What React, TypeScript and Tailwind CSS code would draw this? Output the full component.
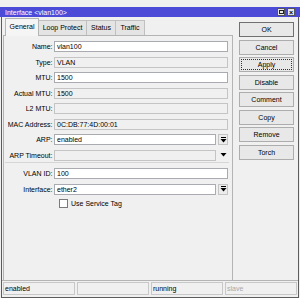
import React from 'react';

function DropIcon({ bar = true }: { bar?: boolean }) {
  return (
    <svg width="7" height="6" viewBox="0 0 7 6" className="block">
      {bar && <rect x="1" y="0" width="5" height="1" fill="#000" />}
      <path d={bar ? 'M0.5 2h6L3.5 5.5z' : 'M0.5 1h6L3.5 4.5z'} fill="#000" />
    </svg>
  );
}

function Row({
  label,
  value = '',
  disabled = false,
  drop = false,
}: {
  label: string;
  value?: string;
  disabled?: boolean;
  drop?: 'box' | 'plain' | false;
}) {
  const box = disabled
    ? 'bg-[#f0f0f0] border-[#c4c4c4]'
    : 'bg-white border-[#a9abb0]';
  return (
    <div className="flex items-center h-[11px]">
      <div className="w-[50px] pr-[1.5px] text-right leading-[11px] whitespace-nowrap">{label}</div>
      <div
        className={`h-[11px] border ${box} flex items-center pl-[2px] leading-[9px] text-black ${
          drop ? 'w-[162px]' : 'w-[174px]'
        }`}
      >
        {value}
      </div>
      {drop === 'box' && (
        <div className="ml-[2px] w-[10px] h-[11px] border border-[#c4c4c4] bg-[#ececec] flex items-center justify-center">
          <DropIcon />
        </div>
      )}
      {drop === 'plain' && (
        <div className="ml-[2px] w-[10px] h-[11px] flex items-center justify-center">
          <DropIcon bar={false} />
        </div>
      )}
    </div>
  );
}

function Btn({ children, kind }: { children: React.ReactNode; kind?: 'default' | 'focus' }) {
  return (
    <div
      className={`h-[15px] w-[55px] border bg-[#e8e8e8] flex items-center justify-center ${
        kind === 'default' ? 'border-[#707070]' : 'border-[#adadad]'
      }`}
    >
      {kind === 'focus' ? (
        <div className="w-[51px] h-[11px] border border-dotted border-[#333] flex items-center justify-center leading-none">
          {children}
        </div>
      ) : (
        <span className="leading-none">{children}</span>
      )}
    </div>
  );
}

export default function App() {
  const tabs = ['Loop Protect', 'Status', 'Traffic'];
  const tabW = ['w-[48px]', 'w-[29px]', 'w-[29px]'];
  const buttons = ['Disable', 'Comment', 'Copy', 'Remove', 'Torch'];

  return (
    <div className="w-[300px] h-[298px] bg-[#f0f0f0] flex flex-col pt-[7px] font-['Liberation_Sans',sans-serif] text-[7px] text-black">
      {/* title bar */}
      <div className="h-[10px] bg-[#4b4bd8] flex items-center justify-between pl-[5px] pr-[5px] text-white">
        <span className="leading-none">Interface &lt;vlan100&gt;</span>
        <div className="flex gap-[2px]">
          <div className="w-[8px] h-[8px] bg-[#e8e8e8] border border-[#555] flex items-center justify-center">
            <div className="w-[5px] h-[4px] border border-[#222]" />
          </div>
          <div className="w-[8px] h-[8px] bg-[#e8e8e8] border border-[#555] flex items-center justify-center text-[7px] font-bold leading-none text-black">
            ×
          </div>
        </div>
      </div>

      {/* body */}
      <div className="flex-1 mx-[1px] border-x border-b border-[#5c5c5c] flex flex-col">
        <div className="flex-1 flex pt-[1px]">
          {/* left: tabs + panel */}
          <div className="ml-[1px] w-[230px] flex flex-col">
            <div className="h-[17px] flex items-end pl-[2px]">
              <div className="relative z-10 h-[18px] -mb-px w-[34px] bg-[#f5f5f5] border border-b-0 border-[#b4b4b4] flex items-center justify-center">
                General
              </div>
              {tabs.map((t, i) => (
                <div
                  key={t}
                  className={`h-[15px] ${tabW[i]} bg-[#e4e4e4] border border-b-0 border-l-0 border-[#c0c0c0] flex items-center justify-center`}
                >
                  {t}
                </div>
              ))}
            </div>
            <div className="flex-1 border-x border-t border-[#b4b4b4] bg-[#f0f0f0] pt-[5px]">
              <div className="flex flex-col gap-[4.5px]">
                <Row label="Name:" value="vlan100" />
                <Row label="Type:" value="VLAN" disabled />
                <Row label="MTU:" value="1500" />
                <Row label="Actual MTU:" value="1500" disabled />
                <Row label="L2 MTU:" disabled />
                <Row label="MAC Address:" value="0C:DB:77:4D:00:01" disabled />
                <Row label="ARP:" value="enabled" drop="box" />
                <Row label="ARP Timeout:" disabled drop="plain" />
              </div>
              <div className="mt-[1.5px] ml-[1px] w-[224px] h-px bg-[#d6d6d6]" />
              <div className="mt-[5px] flex flex-col gap-[4.5px]">
                <Row label="VLAN ID:" value="100" />
                <Row label="Interface:" value="ether2" drop="box" />
                <div className="flex items-center h-[9px] pl-[55px]">
                  <div className="w-[9px] h-[9px] bg-white border border-[#7a7a7a]" />
                  <span className="ml-[3px] leading-none">Use Service Tag</span>
                </div>
              </div>
            </div>
          </div>

          {/* right: buttons */}
          <div className="ml-[6px] pt-[4px] flex flex-col gap-[2.5px]">
            <Btn kind="default">OK</Btn>
            <Btn>Cancel</Btn>
            <Btn kind="focus">Apply</Btn>
            {buttons.map((b) => (
              <Btn key={b}>{b}</Btn>
            ))}
          </div>
        </div>

        {/* status bar */}
        <div className="h-[17px] border-t border-[#b4b4b4] flex gap-[2px] px-[1px] pt-[1px]">
          {['enabled', '', 'running', 'slave'].map((s, i) => (
            <div
              key={i}
              className={`flex-1 h-[13px] border border-[#c8c8c8] pl-[1px] flex items-center leading-none ${
                s === 'slave' ? 'text-[#a8a8a8]' : 'text-black'
              }`}
            >
              {s}
            </div>
          ))}
        </div>
      </div>
    </div>
  );
}
